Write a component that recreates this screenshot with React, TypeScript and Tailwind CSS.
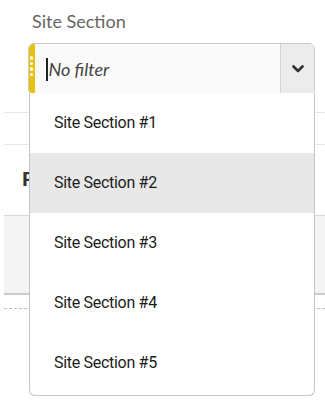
import { ReactElement } from "react";

const SECTIONS = ["Site Section #1", "Site Section #2", "Site Section #3", "Site Section #4", "Site Section #5"];

const Chevron = (): ReactElement => (
  <svg width="12" height="8" viewBox="0 0 12 8" fill="none">
    <polyline points="1.5,1.5 6,6 10.5,1.5" stroke="#333" strokeWidth="2.6" strokeLinecap="round" strokeLinejoin="round" />
  </svg>
);

const App = (): ReactElement => {
  return (
    <div className="relative w-[325px] h-[400px] overflow-hidden bg-white">
      <div className="pt-[10px] pl-[32px] font-['Lato',sans-serif] text-[18px] leading-[22px] text-[#666]">
        Site Section
      </div>

      <div className="mt-[11px] ml-[28px] w-[287px] h-[52px] flex border border-[#c9c9c9] rounded-[6px] overflow-hidden bg-[#fafafa]">
        <div className="w-[7px] -ml-px -my-px bg-[#e6c20e] flex flex-col items-center justify-center gap-[2px] pb-[6px]">
          {[0, 1, 2, 3].map((i) => (
            <span key={i} className="w-[3.5px] h-[3.5px] rounded-full bg-[#fffbe6]" />
          ))}
        </div>
        <div className="flex-1 flex items-center pl-[11px]">
          <span className="w-[1.5px] h-[23px] bg-[#222] mr-[1px]" />
          <span className="font-['Lato',sans-serif] italic text-[18px] text-[#444]">No filter</span>
        </div>
        <div className="w-[34px] border-l border-[#d4d4d4] bg-[#ececec] flex items-center justify-center">
          <Chevron />
        </div>
      </div>

      {/* page behind the open menu */}
      <div className="ml-[4px]">
        <div className="mt-[17px] border-t border-[#e6e6e6]" />
        <div className="mt-[31px] border-t border-[#e6e6e6]" />
        <div className="mt-[22px] pl-[18px] font-['Liberation_Sans',sans-serif] font-bold text-[21px] leading-[24px] text-[#333]">
          F
        </div>
        <div className="mt-[24px] h-[80px] bg-[#f4f4f4] border-t border-[#d8d8d8] border-b-2 border-b-[#cccccc]" />
        <div className="mt-[13px] border-t border-dashed border-[#bdbdbd]" />
      </div>

      <div className="absolute left-[29px] top-[93px] w-[286px] pb-[2px] bg-white border border-t-0 border-[#c4c4c4] rounded-b-[6px]">
        {SECTIONS.map((name, i) => (
          <div
            key={name}
            className={
              "h-[60px] flex items-center pl-[24px] font-['Roboto',sans-serif] text-[16px] tracking-[-0.3px] text-[#1c1c1c] " +
              (i === 1 ? "bg-[#e8e8e8]" : "")
            }
          >
            {name}
          </div>
        ))}
      </div>
    </div>
  );
};

export default App;
